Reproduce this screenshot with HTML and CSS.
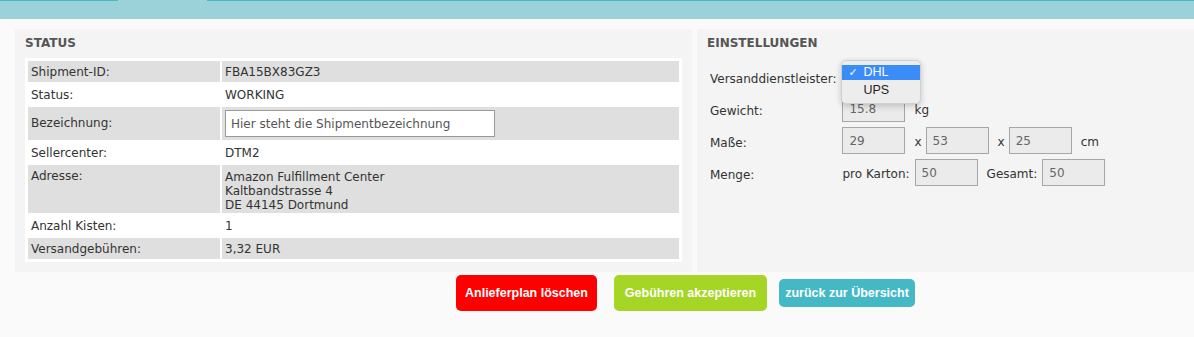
FILE: index.html
```html
<!DOCTYPE html>
<html lang="de">
<head>
	<meta charset="UTF-8">
	<title>Shipment FBA15BX83GZ3</title>
	<link rel="stylesheet" href="styles.css">
</head>
<body>
	<div class="topbar">
		<div class="bar-line bar-start"></div>
		<div class="bar-tab"></div>
		<div class="bar-line bar-rest"></div>
	</div>

	<div class="content">
		<div class="panels">
			<div class="panel panel-status">
				<h3>STATUS</h3>
				<table class="info">
					<tr class="odd">
						<td class="label">Shipment-ID:</td>
						<td>FBA15BX83GZ3</td>
					</tr>
					<tr>
						<td class="label">Status:</td>
						<td>WORKING</td>
					</tr>
					<tr class="odd">
						<td class="label mid">Bezeichnung:</td>
						<td class="mid"><input type="text" class="name-input" value="Hier steht die Shipmentbezeichnung"></td>
					</tr>
					<tr>
						<td class="label">Sellercenter:</td>
						<td>DTM2</td>
					</tr>
					<tr class="odd">
						<td class="label">Adresse:</td>
						<td class="address">Amazon Fulfillment Center<br>Kaltbandstrasse 4<br>DE 44145 Dortmund</td>
					</tr>
					<tr>
						<td class="label">Anzahl Kisten:</td>
						<td>1</td>
					</tr>
					<tr class="odd">
						<td class="label">Versandgebühren:</td>
						<td>3,32 EUR</td>
					</tr>
				</table>
			</div>

			<div class="panel panel-settings">
				<h3>EINSTELLUNGEN</h3>
				<table class="settings">
					<tr>
						<td class="label">Versanddienstleister:</td>
						<td>
							<div class="select-wrap">
								<ul class="select-menu">
									<li class="selected"><span class="check">&#10003;</span>DHL</li>
									<li>UPS</li>
								</ul>
							</div>
						</td>
					</tr>
					<tr>
						<td class="label">Gewicht:</td>
						<td>
							<div class="field">
								<input type="text" class="num" value="15.8" readonly>
								<span class="unit">kg</span>
							</div>
						</td>
					</tr>
					<tr>
						<td class="label">Maße:</td>
						<td>
							<div class="field">
								<input type="text" class="num" value="29" readonly>
								<span class="times">x</span>
								<input type="text" class="num" value="53" readonly>
								<span class="times">x</span>
								<input type="text" class="num" value="25" readonly>
								<span class="unit">cm</span>
							</div>
						</td>
					</tr>
					<tr>
						<td class="label">Menge:</td>
						<td>
							<div class="field">
								<span class="pre">pro Karton:</span>
								<input type="text" class="num" value="50" readonly>
								<span class="pre gap">Gesamt:</span>
								<input type="text" class="num" value="50" readonly>
							</div>
						</td>
					</tr>
				</table>
			</div>
		</div>

		<div class="actions">
			<a class="btn btn-red">Anlieferplan löschen</a>
			<a class="btn btn-green">Gebühren akzeptieren</a>
			<a class="btn btn-teal">zurück zur Übersicht</a>
		</div>
	</div>
</body>
</html>
```

FILE: styles.css
```css
*{padding: 0;margin: 0;box-sizing: border-box;}
body{
	background-color: #fafafa;
	font-family: "DejaVu Sans", Verdana, sans-serif;
	font-size: 12px;
	color: #333;
}
.topbar{
	display: flex;
	height: 19px;
	background-color: #9bd2da;
}
.bar-line{
	border-top: 1px solid #45b8c5;
}
.bar-start{
	width: 118px;
}
.bar-tab{
	width: 89px;
}
.bar-rest{
	flex: 1;
}
.content{
	padding: 10px 0 0 15px;
}
.panels{
	display: flex;
	gap: 5px;
}
.panel{
	background-color: #f4f4f4;
	padding: 7px 10px 10px 10px;
}
.panel-status{
	width: 677px;
}
.panel-settings{
	flex: 1;
}
.panel h3{
	font-size: 12px;
	line-height: 15px;
	font-weight: bold;
	color: #555;
}
.info{
	width: 100%;
	margin-top: 7px;
	background-color: #fff;
	border: 1px solid #fff;
	border-spacing: 2px;
}
.info td{
	padding: 4px 3px 2px 3px;
	line-height: 15px;
	vertical-align: top;
}
.info tr.odd td{
	background-color: #dfdfdf;
}
.info td.label{
	width: 192px;
}
.info td.mid{
	vertical-align: middle;
	padding: 3px 3px;
}
.info td.address{
	line-height: 14px;
	padding: 5px 3px 1px 3px;
}
.name-input{
	display: block;
	width: 270px;
	height: 27px;
	border: 1px solid #999;
	background-color: #fff;
	padding: 0 5px;
	font-family: "DejaVu Sans", Verdana, sans-serif;
	font-size: 12px;
	color: #555;
}
.settings{
	margin-top: 10px;
	border-spacing: 0;
}
.settings td{
	height: 32px;
	padding: 2px 3px 3px 3px;
	vertical-align: middle;
}
.settings td.label{
	width: 132px;
	padding-top: 4px;
	padding-bottom: 1px;
}
.field{
	display: flex;
	align-items: center;
}
.num{
	width: 63px;
	height: 27px;
	border: 1px solid #a6a6a6;
	background-color: #ebebeb;
	padding: 1px 6px 0 6px;
	font-family: "DejaVu Sans", Verdana, sans-serif;
	font-size: 12px;
	color: #666;
}
.field span{
	padding-top: 2px;
}
.unit{
	margin-left: 9px;
}
.times{
	margin: 0 4px 0 9px;
}
.pre{
	margin-right: 5px;
}
.pre.gap{
	margin-left: 9px;
}
.select-wrap{
	position: relative;
	height: 20px;
}
.select-menu{
	position: absolute;
	left: -1px;
	top: -7px;
	width: 80px;
	padding: 4px 0 4px 0;
	list-style: none;
	background-color: #ededed;
	border: 1px solid #d0d0d0;
	border-radius: 5px;
	box-shadow: 0 2px 6px rgba(0,0,0,0.2);
	font-family: "Liberation Sans", Arial, sans-serif;
	font-size: 12.5px;
	color: #222;
	z-index: 10;
}
.select-menu li{
	height: 15px;
	line-height: 15px;
	padding-left: 21px;
	position: relative;
}
.select-menu li + li{
	margin-top: 1px;
	height: 18px;
	line-height: 18px;
}
.select-menu li.selected{
	background-color: #3a8cf8;
	color: #fff;
}
.check{
	position: absolute;
	left: 6px;
	font-family: "DejaVu Sans", sans-serif;
	font-size: 11px;
}
.actions{
	padding: 3px 0 0 441px;
	display: flex;
	align-items: center;
}
.btn{
	display: inline-block;
	font-family: "Liberation Sans", Arial, sans-serif;
	font-size: 12.5px;
	font-weight: bold;
	line-height: 16px;
	color: #fff;
	border-radius: 5px;
	padding: 10px 0;
	text-align: center;
	cursor: pointer;
}
.btn-red{
	background-color: #ff0000;
	width: 141px;
}
.btn-green{
	background-color: #a5d525;
	width: 153px;
	margin-left: 17px;
}
.btn-teal{
	background-color: #45b8c5;
	padding: 6px 0;
	margin-left: 12px;
	width: 136px;
}
```
